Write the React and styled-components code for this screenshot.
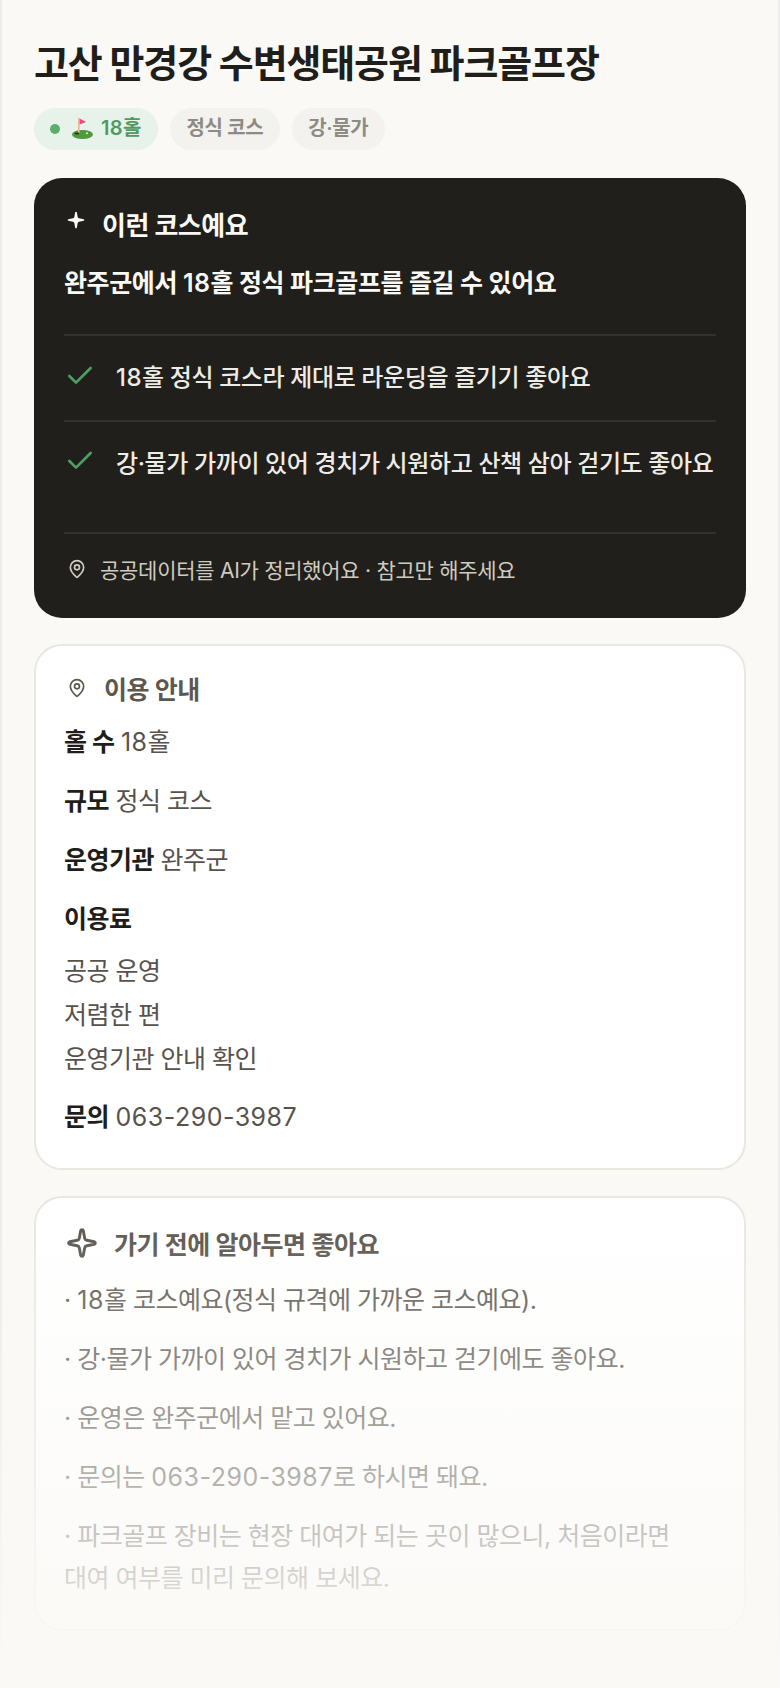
import React from "react";
import styled, { createGlobalStyle } from "styled-components";
import { Check, MapPin, Sparkle } from "lucide-react";

const Global = createGlobalStyle`
  html, body { margin: 0; padding: 0; background: #faf9f6; }
  * { box-sizing: border-box; }
  body { font-family: Inter, "Noto Sans CJK KR", sans-serif; }
`;

const Shell = styled.div`
  position: relative;
  width: 780px;
  height: 1688px;
  overflow: hidden;
  background: #faf9f6;
  box-shadow: inset 2px 0 #eeece6, inset -2px 0 #eeece6;
  padding: 40px 34px 0;
  display: flex;
  flex-direction: column;
`;

const Fade = styled.div`
  position: absolute;
  left: 0;
  right: 0;
  bottom: 0;
  height: 470px;
  background: linear-gradient(to bottom, rgba(250, 249, 246, 0), #faf9f6 99%);
  pointer-events: none;
`;

const Title = styled.h1`
  margin: 0;
  font-size: 38px;
  line-height: 46px;
  font-weight: 700;
  letter-spacing: -0.03em;
  color: #1f1e1a;
`;

const Chips = styled.div`
  display: flex;
  gap: 12px;
  margin-top: 22px;
`;

const Chip = styled.span`
  display: inline-flex;
  align-items: center;
  gap: 8px;
  height: 42px;
  padding: 0 ${(p) => (p.$green ? "17px 0 16px" : "16.5px")};
  border-radius: 21px;
  font-size: 20px;
  font-weight: 600;
  letter-spacing: -0.02em;
  background: ${(p) => (p.$green ? "#e6f2ea" : "#f3f2ee")};
  color: ${(p) => (p.$green ? "#4f9a62" : "#8f8b82")};
`;

const ChipText = styled.span`
  padding-bottom: 5px;
`;

const Dot = styled.i`
  width: 10px;
  height: 10px;
  border-radius: 50%;
  background: #59b06a;
`;

const Num = styled.span`
  letter-spacing: 0.02em;
`;

const Dark = styled.section`
  margin-top: 28px;
  border-radius: 28px;
  background: #201f1b;
  padding: 26px 30px 0;
  height: 440px;
  flex-shrink: 0;
  display: flex;
  flex-direction: column;
`;

const IconBox = styled.span`
  display: inline-flex;
  align-items: center;
  justify-content: center;
  flex-shrink: 0;
  width: ${(p) => p.$w}px;
  color: ${(p) => p.$color || "inherit"};
  margin-bottom: ${(p) => p.$raise || 0}px;
  padding-left: ${(p) => p.$nudge || 0}px;
`;

const DarkHead = styled.div`
  display: flex;
  align-items: center;
  gap: 14px;
  height: 38px;
  font-size: 26px;
  font-weight: 700;
  letter-spacing: -0.02em;
  color: #faf9f6;
`;

const Lead = styled.p`
  margin: 23px 0 0;
  font-size: 25px;
  line-height: 36px;
  font-weight: 600;
  letter-spacing: -0.016em;
  color: #faf9f6;
  padding-bottom: 33px;
  border-bottom: 2px solid #33322e;
`;

const CheckRow = styled.div`
  display: flex;
  align-items: center;
  gap: 20px;
  height: ${(p) => p.$h}px;
  padding-bottom: ${(p) => p.$pb || 0}px;
  border-bottom: 2px solid #33322e;
  font-size: 24px;
  font-weight: 500;
  letter-spacing: -0.016em;
  color: #eeece6;
`;

const Foot = styled.div`
  display: flex;
  align-items: center;
  gap: 12px;
  margin-top: 20px;
  font-size: 21px;
  letter-spacing: -0.013em;
  color: #cfcbc1;
`;

const Card = styled.section`
  margin-top: 26px;
  border: 2px solid #e9e7e0;
  border-radius: 28px;
  background: #fff;
  padding: ${(p) => p.$pt || 24}px 28px 0;
  height: ${(p) => p.$h}px;
  flex-shrink: 0;
`;

const CardHead = styled.div`
  display: flex;
  align-items: center;
  gap: ${(p) => p.$gap}px;
  height: 36px;
  font-size: 25px;
  font-weight: 600;
  letter-spacing: -0.02em;
  color: #5c5850;
  margin-bottom: ${(p) => p.$mb}px;
`;

const Row = styled.div`
  font-size: 25px;
  line-height: 44px;
  letter-spacing: -0.02em;
  color: #57534c;
  margin-bottom: ${(p) => p.$mb ?? 15}px;
  margin-top: ${(p) => p.$mt || 0}px;
  b { font-weight: 700; color: #1f1e1a; }
`;

const Line = styled.div`
  font-size: 25px;
  line-height: 44px;
  letter-spacing: -0.02em;
  color: #57534c;
`;

const Note = styled.div`
  font-size: 25px;
  line-height: 42px;
  letter-spacing: -0.02em;
  color: #5c5850;
  margin-bottom: 17px;
`;

const GolfEmoji = () => (
  <svg width="25" height="25" viewBox="0 0 25 25">
    <ellipse cx="14.5" cy="17.5" rx="10.5" ry="4.5" fill="#4f9a3f" />
    <rect x="10" y="1" width="1.6" height="16" fill="#e9b98c" />
    <path d="M11.6 1.5 L18 5 L11.6 7.5 Z" fill="#f5457e" />
    <ellipse cx="9" cy="16.5" rx="2.6" ry="0.9" fill="#3a2a22" />
    <circle cx="19" cy="16.2" r="1" fill="#e8efe6" />
  </svg>
);

export default function App() {
  return (
    <Shell>
      <Global />
      <Title>고산 만경강 수변생태공원 파크골프장</Title>
      <Chips>
        <Chip $green><Dot /><GolfEmoji /><ChipText><Num>18</Num>홀</ChipText></Chip>
        <Chip><ChipText>정식 코스</ChipText></Chip>
        <Chip><ChipText>강·물가</ChipText></Chip>
      </Chips>
      <Dark>
        <DarkHead>
          <IconBox $w={24} $raise={6}><Sparkle size={20} fill="currentColor" strokeWidth={0} /></IconBox>
          이런 코스예요
        </DarkHead>
        <Lead>완주군에서 <Num>18</Num>홀 정식 파크골프를 즐길 수 있어요</Lead>
        <CheckRow $h={86} $pb={5}>
          <IconBox $w={32} $color="#4f9e62"><Check size={32} /></IconBox>
          <span><Num>18</Num>홀 정식 코스라 제대로 라운딩을 즐기기 좋아요</span>
        </CheckRow>
        <CheckRow $h={112} $pb={32}>
          <IconBox $w={32} $color="#4f9e62"><Check size={32} /></IconBox>
          강·물가 가까이 있어 경치가 시원하고 산책 삼아 걷기도 좋아요
        </CheckRow>
        <Foot><IconBox $w={24} $nudge={1}><MapPin size={20} /></IconBox>공공데이터를 AI가 정리했어요 · 참고만 해주세요</Foot>
      </Dark>
      <Card $h={526}>
        <CardHead $gap={16} $mb={14}><IconBox $w={24} $nudge={1}><MapPin size={20} /></IconBox>이용 안내</CardHead>
        <Row><b>홀 수</b> <Num>18</Num>홀</Row>
        <Row><b>규모</b> 정식 코스</Row>
        <Row><b>운영기관</b> 완주군</Row>
        <Row $mb={8}><b>이용료</b></Row>
        <Line>공공 운영</Line>
        <Line>저렴한 편</Line>
        <Line>운영기관 안내 확인</Line>
        <Row $mt={14}><b>문의</b> <Num>063-290-3987</Num></Row>
      </Card>
      <Card $h={435} $pt={27}>
        <CardHead $gap={14} $mb={18}><IconBox $w={36}><Sparkle size={32} strokeWidth={2.2} /></IconBox>가기 전에 알아두면 좋아요</CardHead>
        <Note>· <Num>18</Num>홀 코스예요(정식 규격에 가까운 코스예요).</Note>
        <Note>· 강·물가 가까이 있어 경치가 시원하고 걷기에도 좋아요.</Note>
        <Note>· 운영은 완주군에서 맡고 있어요.</Note>
        <Note>· 문의는 <Num>063-290-3987</Num>로 하시면 돼요.</Note>
        <Note>· 파크골프 장비는 현장 대여가 되는 곳이 많으니, 처음이라면<br />대여 여부를 미리 문의해 보세요.</Note>
      </Card>
      <Card $h={200} />
      <Fade />
    </Shell>
  );
}
